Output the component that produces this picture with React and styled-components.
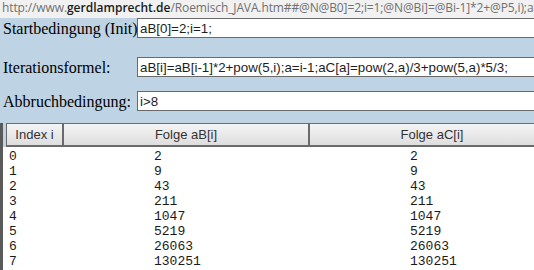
import React from "react";
import styled, { createGlobalStyle } from "styled-components";

const GlobalStyle = createGlobalStyle`
    html, body {
        margin: 0;
        padding: 0;
        background: #bed3e3;
        overflow: hidden;
    }
`;

const Page = styled.div`
    width: 534px;
    height: 270px;
    overflow: hidden;
`;

const AddressBar = styled.div`
    height: 18px;
    line-height: 16px;
    padding-left: 2px;
    background: #f1f1f1;
    color: #707070;
    font-family: "Open Sans", "Liberation Sans", sans-serif;
    font-size: 12px;
    letter-spacing: -0.12px;
    white-space: nowrap;
    overflow: hidden;
    box-sizing: border-box;

    b {
        color: #1a1a1a;
        font-weight: 600;
        letter-spacing: 0;
    }
`;

const FieldRow = styled.div`
    display: flex;
    align-items: center;
    margin-top: ${(p) => p.$gap || 0}px;
`;

const Label = styled.label`
    flex: none;
    width: 134px;
    padding-left: 3px;
    font-family: "Liberation Serif", serif;
    font-size: 16px;
    color: #000;
    white-space: nowrap;
    position: relative;
    top: ${(p) => p.$shift || 0}px;
`;

const Field = styled.input`
    flex: none;
    width: 420px;
    height: 20px;
    box-sizing: border-box;
    margin: 0;
    padding: 0 2px;
    border: 1px solid #6a6a6a;
    background: #fff;
    font-family: "Liberation Sans", Arial, sans-serif;
    font-size: 13.33px;
    color: #1e1e1e;
    outline: none;
`;

const Table = styled.div`
    margin-top: 12px;
    width: 560px;
    border-left: 3px solid #5a5a5a;
`;

const HeaderRow = styled.div`
    display: grid;
    grid-template-columns: 56px 246px 246px;
    padding-left: 3px;
`;

const HeaderCell = styled.div`
    height: 24px;
    box-sizing: border-box;
    border-top: 1px solid #6e6e6e;
    border-bottom: 2px solid #6a6a6a;
    border-left: ${(p) => (p.$first ? 1 : 2)}px solid #6a6a6a;
    background: linear-gradient(#f4f4f4, #dedede);
    font-family: "Liberation Sans", Arial, sans-serif;
    font-size: 13px;
    color: #333;
    display: flex;
    align-items: center;
    justify-content: center;
`;

const Body = styled.div`
    background: #fff;
    padding-top: 2px;
    height: 130px;
`;

const DataRow = styled.div`
    display: grid;
    grid-template-columns: 145px 256px 1fr;
    padding-left: 6px;
    height: 15px;
    line-height: 15px;
    font-family: "Liberation Mono", "Courier New", monospace;
    font-size: 13px;
    color: #1a1a1a;
`;

const rows = [
    [0, 2, 2],
    [1, 9, 9],
    [2, 43, 43],
    [3, 211, 211],
    [4, 1047, 1047],
    [5, 5219, 5219],
    [6, 26063, 26063],
    [7, 130251, 130251],
];

export default function App() {
    return (
        <Page>
            <GlobalStyle />
            <AddressBar>
                http://www.<b>gerdlamprecht.de</b>
                /Roemisch_JAVA.htm##@N@B0]=2;i=1;@N@Bi]=@Bi-1]*2+@P5,i);a=i-1;
            </AddressBar>
            <FieldRow>
                <Label $shift={1}>Startbedingung (Init)</Label>
                <Field defaultValue="aB[0]=2;i=1;" />
            </FieldRow>
            <FieldRow $gap={19}>
                <Label $shift={1}>Iterationsformel:</Label>
                <Field defaultValue="aB[i]=aB[i-1]*2+pow(5,i);a=i-1;aC[a]=pow(2,a)/3+pow(5,a)*5/3;" />
            </FieldRow>
            <FieldRow $gap={14}>
                <Label $shift={1}>Abbruchbedingung:</Label>
                <Field defaultValue="i>8" />
            </FieldRow>
            <Table>
                <HeaderRow>
                    <HeaderCell $first>Index i</HeaderCell>
                    <HeaderCell>Folge aB[i]</HeaderCell>
                    <HeaderCell>Folge aC[i]</HeaderCell>
                </HeaderRow>
                <Body>
                    {rows.map(([i, b, c]) => (
                        <DataRow key={i}>
                            <span>{i}</span>
                            <span>{b}</span>
                            <span>{c}</span>
                        </DataRow>
                    ))}
                </Body>
            </Table>
        </Page>
    );
}
